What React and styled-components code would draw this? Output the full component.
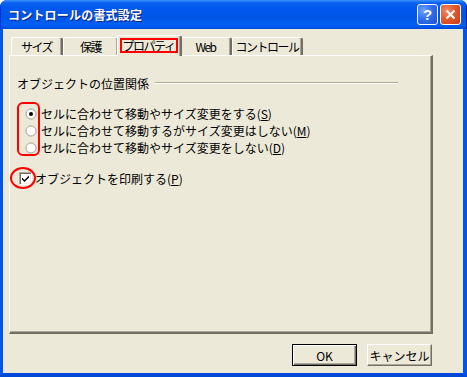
import React from "react";
import styled, { createGlobalStyle } from "styled-components";

const GlobalStyle = createGlobalStyle`
  html, body {
    margin: 0;
    padding: 0;
    background: #ffffff;
  }
  body {
    font-family: "Noto Sans CJK JP", "Liberation Sans", sans-serif;
    font-size: 12px;
  }
`;

const Frame = styled.div`
  width: 467px;
  height: 377px;
  display: flex;
  flex-direction: column;
  border-radius: 7px 7px 0 0;
  overflow: hidden;
  background: #0054e3;
`;

const TitleBar = styled.div`
  height: 29px;
  flex: none;
  display: flex;
  align-items: center;
  padding: 0 5px 0 7px;
  background: linear-gradient(
    to bottom,
    #3d95ff 0%,
    #0a5fef 10%,
    #0058ee 30%,
    #0055e5 60%,
    #0060f4 85%,
    #0058ec 92%,
    #0046d8 100%
  );
  border-left: 1px solid #0831d9;
  border-right: 1px solid #001ea0;
`;

const Title = styled.div`
  flex: 1;
  color: #ffffff;
  font-weight: bold;
  font-size: 12px;
  letter-spacing: 0.2px;
  text-shadow: 1px 1px 0 #0a1f80;
`;

const CaptionButtons = styled.div`
  display: flex;
  gap: 2px;
`;

const CaptionButton = styled.div`
  width: 21px;
  height: 21px;
  box-sizing: border-box;
  border: 1px solid #ffffff;
  border-radius: 3px;
  display: flex;
  align-items: center;
  justify-content: center;
  color: #ffffff;
  font-family: "Liberation Sans", sans-serif;
  font-weight: bold;
  font-size: 15px;
  background: ${(p) =>
    p.$close
      ? "radial-gradient(circle at 30% 30%, #f08a6a 0%, #e35a2b 45%, #c4391a 100%)"
      : "radial-gradient(circle at 30% 30%, #6fa4ff 0%, #2f6ff0 45%, #1e4fd0 100%)"};
`;

const Client = styled.div`
  flex: 1;
  display: flex;
  flex-direction: column;
  background: #ece9d8;
  border-left: 3px solid #0055ea;
  border-right: 4px solid #0055ea;
  border-bottom: 4px solid #0048d8;
  padding: 6px 0 0 6px;
`;

const TabStrip = styled.div`
  display: flex;
  align-items: flex-end;
  height: 20px;
  padding-left: 2px;
  position: relative;
  z-index: 1;
`;

const Tab = styled.div`
  width: ${(p) => p.$w}px;
  height: ${(p) => (p.$active ? 21 : 18)}px;
  margin: ${(p) => (p.$active ? "0 -2px -1px -2px" : "0")};
  position: relative;
  z-index: ${(p) => (p.$active ? 2 : 1)};
  flex: none;
  box-sizing: border-box;
  display: flex;
  align-items: center;
  justify-content: center;
  background: #ece9d8;
  border-top: 1px solid #ffffff;
  border-left: 1px solid #ffffff;
  border-right: 2px solid #716f64;
  border-radius: 2px 3px 0 0;
  box-shadow: inset -1px 0 0 #aca899;
  color: #000000;
  font-size: 12px;
  letter-spacing: -1.5px;
  white-space: nowrap;
  padding-bottom: ${(p) => (p.$active ? 1 : 0)}px;
`;

const Focus = styled.span`
  border: 2px solid #ff0000;
  padding: 0 2px 0 1px;
  line-height: 11px;
`;

const Panel = styled.div`
  position: relative;
  width: 424px;
  height: 279px;
  box-sizing: border-box;
  border-top: 1px solid #ffffff;
  border-left: 1px solid #ffffff;
  border-right: 2px solid #716f64;
  border-bottom: 2px solid #716f64;
  box-shadow: inset -1px -1px 0 #aca899;
  padding: 19px 0 0 7px;
`;

const GroupHeader = styled.div`
  display: flex;
  align-items: center;
  height: 16px;
  width: 381px;
  gap: 6px;
`;

const Rule = styled.div`
  flex: 1;
  height: 0;
  border-top: 1px solid #aca899;
  border-bottom: 1px solid #ffffff;
`;

const Options = styled.div`
  display: flex;
  flex-direction: column;
  margin: 14px 0 0 8px;
`;

const Row = styled.label`
  display: flex;
  align-items: center;
  height: 17px;
  gap: ${(p) => p.$gap || 4}px;
  white-space: nowrap;
`;

const CheckRow = styled(Row)`
  margin: 14px 0 0 2px;
`;

const Key = styled.span`
  text-decoration: underline;
`;

const Box = styled.div`
  width: 13px;
  height: 13px;
  box-sizing: border-box;
  background: #ffffff;
  border-top: 1px solid #aca899;
  border-left: 1px solid #aca899;
  border-right: 1px solid #ffffff;
  border-bottom: 1px solid #ffffff;
  box-shadow: inset 1px 1px 0 #716f64, inset -1px -1px 0 #f1efe2;
  display: flex;
  align-items: center;
  justify-content: center;
`;

const Mark = styled.div`
  position: absolute;
  left: ${(p) => p.$x}px;
  top: ${(p) => p.$y}px;
  width: ${(p) => p.$w}px;
  height: ${(p) => p.$h}px;
  box-sizing: border-box;
  border: 2px solid #ff0000;
  border-radius: ${(p) => p.$r};
  pointer-events: none;
`;

const Buttons = styled.div`
  width: 424px;
  display: flex;
  justify-content: flex-end;
  gap: 10px;
  margin-top: 10px;
  padding-right: 1px;
  box-sizing: border-box;
`;

const Button = styled.div`
  width: 65px;
  height: 22px;
  box-sizing: border-box;
  display: flex;
  align-items: center;
  justify-content: center;
  background: #ece9d8;
  font-size: 12px;
  color: #000000;
  border: 1px solid #000000;
  box-shadow: inset 1px 1px 0 #ffffff, inset -1px -1px 0 #716f64, inset -2px -2px 0 #aca899;
  ${(p) =>
    !p.$default &&
    `border-color: #ffffff #716f64 #716f64 #ffffff; box-shadow: inset -1px -1px 0 #aca899;`}
`;

function Radio({ checked }) {
  return (
    <svg width="12" height="12" viewBox="0 0 12 12">
      <circle cx="6" cy="6" r="5.5" fill="#d4d0c8" />
      <circle cx="6" cy="6" r="5" fill="#ffffff" stroke="#aca899" strokeWidth="1" />
      <path d="M2.3 8.8 A4.2 4.2 0 0 1 8.8 2.3" fill="none" stroke="#c8c4b4" strokeWidth="1" />
      {checked && <circle cx="6" cy="6" r="2" fill="#000000" />}
    </svg>
  );
}

function Check() {
  return (
    <svg width="9" height="9" viewBox="0 0 9 9">
      <path d="M1 3.5 L3.5 6 L8 1.5 L8 3.5 L3.5 8 L1 5.5 Z" fill="#000000" />
    </svg>
  );
}

const tabs = [
  { label: "サイズ", w: 52 },
  { label: "保護", w: 56 },
  { label: "プロパティ", w: 65, active: true },
  { label: "Web", w: 52 },
  { label: "コントロール", w: 71 },
];

export default function App() {
  return (
    <>
      <GlobalStyle />
      <Frame>
        <TitleBar>
          <Title>コントロールの書式設定</Title>
          <CaptionButtons>
            <CaptionButton>?</CaptionButton>
            <CaptionButton $close>
              <svg width="11" height="11" viewBox="0 0 11 11">
                <path d="M1.5 1.5 L9.5 9.5 M9.5 1.5 L1.5 9.5" stroke="#ffffff" strokeWidth="2" />
              </svg>
            </CaptionButton>
          </CaptionButtons>
        </TitleBar>
        <Client>
          <TabStrip>
            {tabs.map((t) => (
              <Tab key={t.label} $w={t.w} $active={t.active}>
                {t.active ? <Focus>{t.label}</Focus> : t.label}
              </Tab>
            ))}
          </TabStrip>
          <Panel>
            <GroupHeader>
              <span>オブジェクトの位置関係</span>
              <Rule />
            </GroupHeader>
            <Options>
              <Row>
                <Radio checked />
                <span>
                  セルに合わせて移動やサイズ変更をする(<Key>S</Key>)
                </span>
              </Row>
              <Row>
                <Radio />
                <span>
                  セルに合わせて移動するがサイズ変更はしない(<Key>M</Key>)
                </span>
              </Row>
              <Row>
                <Radio />
                <span>
                  セルに合わせて移動やサイズ変更をしない(<Key>D</Key>)
                </span>
              </Row>
            </Options>
            <CheckRow $gap={3}>
              <Box>
                <Check />
              </Box>
              <span>
                オブジェクトを印刷する(<Key>P</Key>)
              </span>
            </CheckRow>
            <Mark $x={7} $y={46} $w={23} $h={54} $r="6px" />
            <Mark $x={0} $y={111} $w={26} $h={22} $r="50%" />
          </Panel>
          <Buttons>
            <Button $default>OK</Button>
            <Button>キャンセル</Button>
          </Buttons>
        </Client>
      </Frame>
    </>
  );
}
